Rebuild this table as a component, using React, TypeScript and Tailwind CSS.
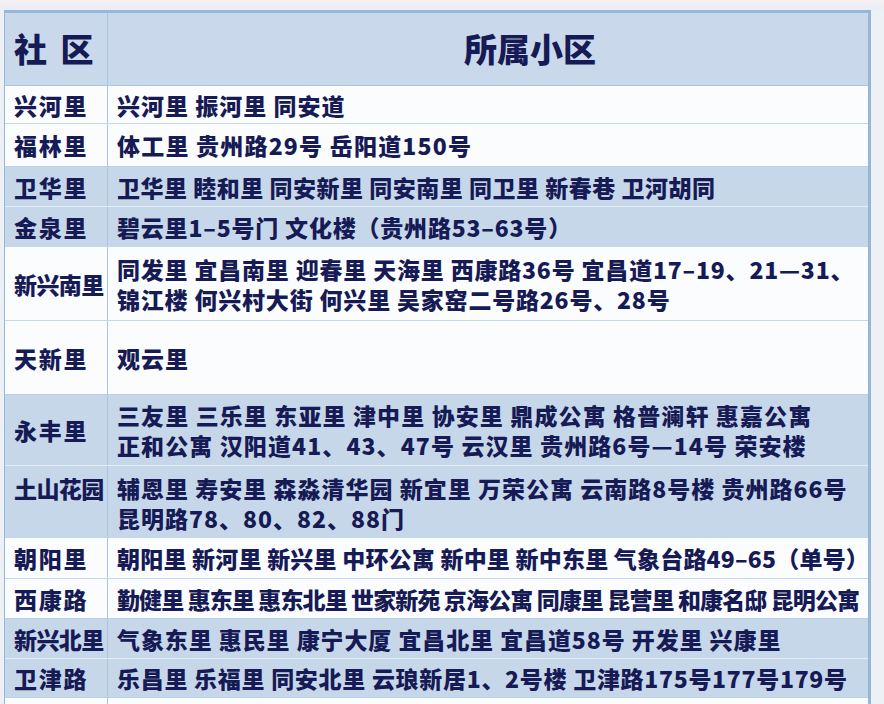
const rows = [
  { name: '兴河里', lines: ['兴河里 振河里 同安道'], h: 'h-[37px]', tone: 'white', tr: 'tracking-[1px]' },
  { name: '福林里', lines: ['体工里 贵州路29号 岳阳道150号'], h: 'h-[43px]', tone: 'white', tr: 'tracking-[1.2px]' },
  { name: '卫华里', lines: ['卫华里 睦和里 同安新里 同安南里 同卫里 新春巷 卫河胡同'], h: 'h-[40px]', tone: 'blue', tr: 'tracking-[0.5px]' },
  { name: '金泉里', lines: ['碧云里1–5号门 文化楼（贵州路53–63号）'], h: 'h-[40px]', tone: 'blue', tr: 'tracking-[0.8px]' },
  {
    name: '新兴南里',
    lines: ['同发里 宜昌南里 迎春里 天海里 西康路36号 宜昌道17–19、21—31、', '锦江楼 何兴村大街 何兴里 吴家窑二号路26号、28号'],
    h: 'h-[74px]',
    tone: 'white',
    tr: 'tracking-[0.8px]',
  },
  { name: '天新里', lines: ['观云里'], h: 'h-[74px]', tone: 'white', tr: 'tracking-[1px]' },
  {
    name: '永丰里',
    lines: ['三友里 三乐里 东亚里 津中里 协安里 鼎成公寓 格普澜轩 惠嘉公寓', '正和公寓 汉阳道41、43、47号 云汉里 贵州路6号—14号 荣安楼'],
    h: 'h-[71px]',
    tone: 'blue',
    tr: 'tracking-[1.1px]',
  },
  {
    name: '土山花园',
    lines: ['辅恩里 寿安里 森淼清华园 新宜里 万荣公寓 云南路8号楼 贵州路66号', '昆明路78、80、82、88门'],
    h: 'h-[72px]',
    tone: 'blue',
    tr: 'tracking-[1px]',
    top: true,
  },
  { name: '朝阳里', lines: ['朝阳里 新河里 新兴里 中环公寓 新中里 新中东里 气象台路49–65（单号）'], h: 'h-[41px]', tone: 'white', tr: 'tracking-[0.2px]' },
  { name: '西康路', lines: ['勤健里 惠东里 惠东北里 世家新苑 京海公寓 同康里 昆营里 和康名邸 昆明公寓'], h: 'h-[40px]', tone: 'white', tr: 'tracking-[-0.9px]' },
  { name: '新兴北里', lines: ['气象东里 惠民里 康宁大厦 宜昌北里 宜昌道58号 开发里 兴康里'], h: 'h-[40px]', tone: 'blue', tr: 'tracking-[0.9px]' },
  { name: '卫津路', lines: ['乐昌里 乐福里 同安北里 云琅新居1、2号楼 卫津路175号177号179号'], h: 'h-[39px]', tone: 'blue', tr: 'tracking-[0.7px]' },
];

export default function App() {
  return (
    <div
      className="w-[884px] h-[704px] overflow-hidden bg-[#edf1f6] text-[#161a55]"
      style={{ fontFamily: '"Noto Sans CJK SC", "Noto Sans", sans-serif' }}
    >
      <div className="h-[10px] bg-gradient-to-b from-[#f6f0f4] to-[#eaeef5]" />
      <div className="ml-1 w-[867px] border-t-[3px] border-r-[3px] border-l border-[#93b8d8] bg-[#fbfcfe]">
        {/* header */}
        <div className="flex h-[73px] bg-[#c9d9eb] border-b border-[#a9c6e0]">
          <div className="w-[103px] shrink-0 border-r border-[#aac5de] flex items-center pl-[9px] text-[33px] font-black tracking-[3px] whitespace-nowrap">
            社 区
          </div>
          <div className="flex-1 flex items-center pl-[356px] text-[33px] font-black">所属小区</div>
        </div>

        {rows.map((r, i) => {
          const blue = r.tone === 'blue';
          const prevBlue = i > 0 && rows[i - 1].tone === 'blue';
          const line = blue && prevBlue ? 'border-[#e4edf7]' : blue ? 'border-[#b9d1e7]' : 'border-[#c3d7ea]';
          return (
            <div
              key={r.name}
              className={`flex ${r.h} border-t ${line} ${blue ? 'bg-[#c7d7ea]' : 'bg-[#fbfcfe]'} ${i === 0 ? 'border-t-0' : ''}`}
            >
              <div
                className={`w-[103px] shrink-0 border-r border-[#aac5de] flex pl-[9px] text-[23px] font-black leading-[30px] whitespace-nowrap ${
                  r.name.length > 3 ? 'tracking-[-0.6px]' : 'tracking-[1.8px]'
                } ${r.top ? 'items-start pt-[7px]' : 'items-center'}`}
              >
                {r.name}
              </div>
              <div
                className={`flex-1 flex flex-col pl-[9px] text-[23px] font-black leading-[30px] whitespace-nowrap ${r.tr} ${
                  r.top ? 'justify-start pt-[7px]' : 'justify-center'
                }`}
              >
                {r.lines.map((l) => (
                  <div key={l}>{l}</div>
                ))}
              </div>
            </div>
          );
        })}

        <div className="flex h-[20px] border-t border-[#b9d1e7] bg-[#fbfcfe]">
          <div className="w-[103px] shrink-0 border-r border-[#aac5de]" />
          <div className="flex-1" />
        </div>
      </div>
    </div>
  );
}
